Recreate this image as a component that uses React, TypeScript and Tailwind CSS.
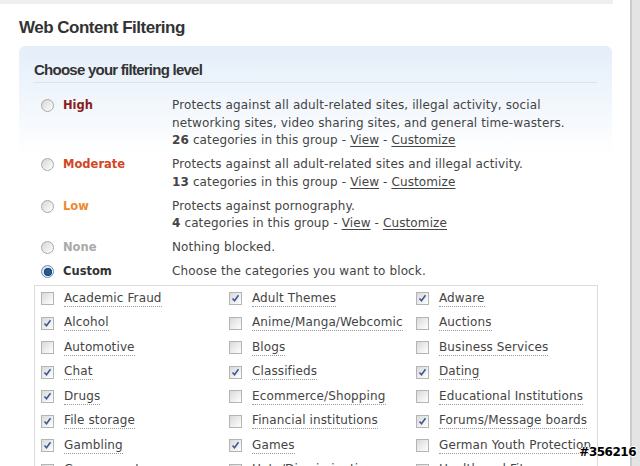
import type { ReactNode } from "react";

type Level = {
  name: string;
  color: string;
  selected?: boolean;
  desc: ReactNode;
};

const links = (count: number) => (
  <>
    <span className="font-bold">{count}</span> categories in this group -{" "}
    <span className="underline underline-offset-2">View</span> -{" "}
    <span className="underline underline-offset-2">Customize</span>
  </>
);

const levels: Level[] = [
  {
    name: "High",
    color: "text-[#8c1b1b]",
    desc: (
      <>
        Protects against all adult-related sites, illegal activity, social networking sites, video
        sharing sites, and general time-wasters.
        <br />
        {links(26)}
      </>
    ),
  },
  {
    name: "Moderate",
    color: "text-[#d4451f]",
    desc: (
      <>
        Protects against all adult-related sites and illegal activity.
        <br />
        {links(13)}
      </>
    ),
  },
  {
    name: "Low",
    color: "text-[#ee8a2c]",
    desc: (
      <>
        Protects against pornography.
        <br />
        {links(4)}
      </>
    ),
  },
  { name: "None", color: "text-[#a9a9a9]", desc: "Nothing blocked." },
  {
    name: "Custom",
    color: "text-[#333]",
    selected: true,
    desc: "Choose the categories you want to block.",
  },
];

const categories: [string, boolean][] = [
  ["Academic Fraud", false],
  ["Adult Themes", true],
  ["Adware", true],
  ["Alcohol", true],
  ["Anime/Manga/Webcomic", false],
  ["Auctions", false],
  ["Automotive", false],
  ["Blogs", false],
  ["Business Services", false],
  ["Chat", true],
  ["Classifieds", true],
  ["Dating", true],
  ["Drugs", true],
  ["Ecommerce/Shopping", false],
  ["Educational Institutions", false],
  ["File storage", true],
  ["Financial institutions", false],
  ["Forums/Message boards", true],
  ["Gambling", true],
  ["Games", true],
  ["German Youth Protection", false],
  ["Government", false],
  ["Hate/Discrimination", true],
  ["Health and Fitness", false],
];

function Radio({ on }: { on?: boolean }) {
  return (
    <span
      className={`flex h-[13px] w-[13px] items-center justify-center rounded-full border ${
        on ? "border-[#6a8fb5]" : "border-[#a9a9a9]"
      } bg-[linear-gradient(135deg,#d6d6d6,#ffffff)]`}
    >
      {on && <span className="h-[6px] w-[6px] rounded-full bg-[#1f5f99] ring-1 ring-[#0d3a66]" />}
    </span>
  );
}

function Checkbox({ on }: { on: boolean }) {
  return (
    <span className="flex h-[13px] w-[13px] shrink-0 items-center justify-center border border-[#b4b4b4] bg-[linear-gradient(135deg,#d9d9d9,#ffffff)]">
      {on && (
        <svg width="9" height="9" viewBox="0 0 9 9">
          <path d="M1.5 4.5 L3.5 6.8 L7.5 1.2" fill="none" stroke="#3d5899" strokeWidth="1.6" />
        </svg>
      )}
    </span>
  );
}

export default function App() {
  return (
    <div className="relative flex h-[466px] w-[640px] overflow-hidden bg-white font-['DejaVu_Sans',sans-serif] text-[12px] tracking-[0.12px] text-[#444]">
      <div className="w-[630px]">
        <div className="h-[4px] w-[613px] bg-[#eeeeee]" />
        <h1 className="ml-[19px] mt-[14px] font-['Liberation_Sans',sans-serif] text-[17px] font-bold leading-[20px] tracking-[-0.5px] text-[#333]">
          Web Content Filtering
        </h1>

        <div className="ml-[19px] mt-[8px] w-[593px] rounded-t-[6px] bg-[linear-gradient(to_bottom,#e4eef9,#ffffff_110px)] px-[15px]">
          <h2 className="border-b border-[#dde2e7] pb-[2px] pt-[14px] font-['Liberation_Sans',sans-serif] text-[15px] font-bold leading-[20px] tracking-[-0.75px] text-[#333]">
            Choose your filtering level
          </h2>

          <div className="mt-[14px] flex flex-col gap-[6.5px] leading-[17.5px]">
            {levels.map((l) => (
              <div key={l.name} className="flex pl-[7px]">
                <div className="flex h-[17.5px] w-[13px] items-center">
                  <Radio on={l.selected} />
                </div>
                <div className={`ml-[9px] w-[109px] text-[11.5px] font-bold tracking-normal ${l.color}`}>
                  {l.name}
                </div>
                <div className="w-[405px]">{l.desc}</div>
              </div>
            ))}
          </div>

          <div className="mt-[4px] w-[564px] border border-[#dcdcdc] pl-[6px] pt-[1px]">
            <div className="grid grid-cols-[188px_187px_1fr]">
              {categories.map(([name, on]) => (
                <div key={name} className="flex h-[24.5px] items-center gap-[10px]">
                  <Checkbox on={on} />
                  <span className="border-b border-dotted border-[#9a9a9a] leading-[15px]">{name}</span>
                </div>
              ))}
            </div>
          </div>
        </div>
      </div>

      <div className="w-[10px] border-l-2 border-[#cccccc] bg-[#e4e4e4]" />

      <div className="absolute bottom-[7px] right-[4px] font-['DejaVu_Sans',sans-serif] text-[12px] font-bold leading-[14px] tracking-[-0.5px] text-black [text-shadow:1px_0_#fff,-1px_0_#fff,0_1px_#fff,0_-1px_#fff]">
        #356216
      </div>
    </div>
  );
}
